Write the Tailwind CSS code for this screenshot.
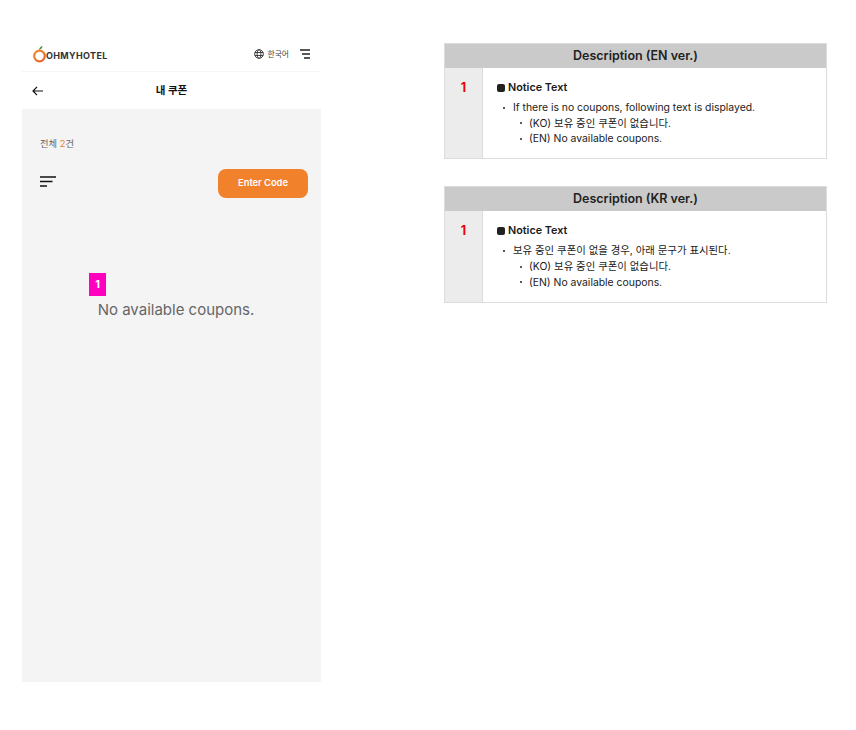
<!DOCTYPE html>
<html lang="ko">
<head>
  <meta charset="UTF-8" />
  <title>내 쿠폰</title>
  <script src="https://cdn.jsdelivr.net/npm/@tailwindcss/browser@4"></script>
</head>
<body class="bg-white h-screen overflow-hidden font-['Inter','Noto_Sans_CJK_KR',sans-serif]">
  <div class="flex items-start pl-[22px] pt-[38px]">

    <!-- Phone -->
    <div class="w-[299px] h-[644px] flex flex-col shrink-0">
      <div class="h-[34px] flex items-center justify-between pl-[11px] pr-[11px] pb-[2px] border-b border-[#f5f5f5] shrink-0">
        <div class="flex items-end">
          <svg width="13" height="18" viewBox="0 0 13 18" fill="none">
            <defs>
              <linearGradient id="peel" x1="0" y1="0" x2="1" y2="1">
                <stop offset="0" stop-color="#f58a2a"/>
                <stop offset="1" stop-color="#e8632c"/>
              </linearGradient>
            </defs>
            <circle cx="6.5" cy="11" r="5.3" stroke="url(#peel)" stroke-width="2.2"/>
            <path d="M6 5 C6.3 3 7.5 1.5 9.5 0.8 C9.5 2.8 8.4 4.4 6 5Z" fill="#4f9a3a"/>
          </svg>
          <span class="mb-[2px] text-[9px] leading-[11px] font-bold tracking-[0.35px] text-[#333]">OHMYHOTEL</span>
        </div>
        <div class="flex items-center">
          <svg width="10" height="10" viewBox="0 0 12 12" fill="none" stroke="#333" stroke-width="1.1">
            <circle cx="6" cy="6" r="5.2"/>
            <ellipse cx="6" cy="6" rx="2.3" ry="5.2"/>
            <path d="M1 4.2H11M1 7.8H11"/>
          </svg>
          <span class="ml-[3px] text-[7.8px] leading-[10px] text-[#444]">한국어</span>
          <svg class="ml-[11px]" width="10" height="10" viewBox="0 0 10 10" stroke="#222" stroke-width="1.4">
            <path d="M0 1H10M2 5H10M4 9H10"/>
          </svg>
        </div>
      </div>

      <div class="h-[37px] relative flex items-center justify-center pt-[1px] shrink-0">
        <svg class="absolute left-[10px] top-[14px]" width="11" height="10" viewBox="0 0 11 10" fill="none" stroke="#111" stroke-width="1.2">
          <path d="M11 5H1M5 .8L1 5L5 9.2"/>
        </svg>
        <span class="text-[10.5px] leading-[14px] font-bold text-[#111]">내 쿠폰</span>
      </div>

      <div class="flex-1 bg-[#f4f4f4] relative px-[18px] pt-[29px]">
        <p class="text-[9.3px] leading-[12px] text-[#666]">전체 <span class="text-[#f0812b]">2</span>건</p>
        <div class="flex items-center justify-between mt-[18.5px] mr-[-5px]">
          <svg class="mb-[3px]" width="16" height="11" viewBox="0 0 16 11" stroke="#111" stroke-width="1.5">
            <path d="M0 1H16M0 5.5H12.5M0 10H7"/>
          </svg>
          <button class="w-[90px] h-[29px] rounded-[8px] bg-[#f2812b] text-white text-[9.3px] font-semibold">Enter Code</button>
        </div>
        <p class="mt-[102.5px] pl-[9px] text-center text-[15px] leading-[20px] text-[#666]">No available coupons.</p>
        <div class="absolute left-[67px] top-[164px] w-[17px] h-[23px] bg-[#ff00bf] text-white text-[11px] font-bold flex items-center justify-center">1</div>
      </div>
    </div>

    <!-- Descriptions -->
    <div class="w-[383px] ml-[123px] mt-[5px] flex flex-col gap-[27px] shrink-0">
      <div class="border border-[#dcdcdc]">
        <div class="h-[24px] bg-[#cacaca] flex items-center justify-center text-[12.5px] font-semibold text-[#222]">Description (EN ver.)</div>
        <div class="flex h-[90px]">
          <div class="w-[38px] bg-[#ececec] border-r border-[#dcdcdc] text-center text-[#f00000] text-[12.5px] font-bold pt-[11px] leading-[18px] shrink-0">1</div>
          <div class="pl-[14px] pt-[13px] text-[10.4px] leading-[15.6px] text-[#1a1a1a]">
            <div class="flex items-center text-[10.8px] font-semibold gap-[3px] h-[14px]"><span class="w-[8px] h-[8px] rounded-[2px] bg-[#222]"></span>Notice Text</div>
            <ul class="mt-[5px]">
              <li class="flex items-center pl-[6px]"><span class="w-[2px] h-[2px] rounded-full bg-[#222] mr-[8px]"></span>If there is no coupons, following text is displayed.</li>
              <li class="flex items-center pl-[23px]"><span class="w-[2px] h-[2px] rounded-full bg-[#222] mr-[7px]"></span>(KO) 보유 중인 쿠폰이 없습니다.</li>
              <li class="flex items-center pl-[23px]"><span class="w-[2px] h-[2px] rounded-full bg-[#222] mr-[7px]"></span>(EN) No available coupons.</li>
            </ul>
          </div>
        </div>
      </div>

      <div class="border border-[#dcdcdc]">
        <div class="h-[24px] bg-[#cacaca] flex items-center justify-center text-[12.5px] font-semibold text-[#222]">Description (KR ver.)</div>
        <div class="flex h-[91px]">
          <div class="w-[38px] bg-[#ececec] border-r border-[#dcdcdc] text-center text-[#f00000] text-[12.5px] font-bold pt-[11px] leading-[18px] shrink-0">1</div>
          <div class="pl-[14px] pt-[13px] text-[10.4px] leading-[15.8px] text-[#1a1a1a]">
            <div class="flex items-center text-[10.8px] font-semibold gap-[3px] h-[14px]"><span class="w-[8px] h-[8px] rounded-[2px] bg-[#222]"></span>Notice Text</div>
            <ul class="mt-[5px]">
              <li class="flex items-center pl-[6px]"><span class="w-[2px] h-[2px] rounded-full bg-[#222] mr-[8px]"></span>보유 중인 쿠폰이 없을 경우, 아래 문구가 표시된다.</li>
              <li class="flex items-center pl-[23px]"><span class="w-[2px] h-[2px] rounded-full bg-[#222] mr-[7px]"></span>(KO) 보유 중인 쿠폰이 없습니다.</li>
              <li class="flex items-center pl-[23px]"><span class="w-[2px] h-[2px] rounded-full bg-[#222] mr-[7px]"></span>(EN) No available coupons.</li>
            </ul>
          </div>
        </div>
      </div>
    </div>

  </div>
</body>
</html>
